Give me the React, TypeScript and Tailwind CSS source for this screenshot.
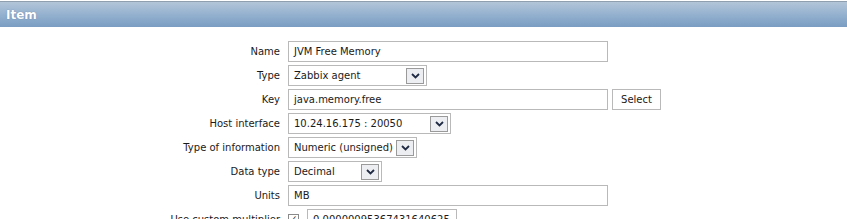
import React from "react";

type Row = {
  label: string;
  kind: "text" | "select" | "key" | "multiplier";
  value: string;
  width: number;
};

const rows: Row[] = [
  { label: "Name", kind: "text", value: "JVM Free Memory", width: 320 },
  { label: "Type", kind: "select", value: "Zabbix agent", width: 139 },
  { label: "Key", kind: "key", value: "java.memory.free", width: 320 },
  { label: "Host interface", kind: "select", value: "10.24.16.175 : 20050", width: 163 },
  { label: "Type of information", kind: "select", value: "Numeric (unsigned)", width: 129 },
  { label: "Data type", kind: "select", value: "Decimal", width: 94 },
  { label: "Units", kind: "text", value: "MB", width: 320 },
  { label: "Use custom multiplier", kind: "multiplier", value: "0.00000095367431640625", width: 150 },
];

function Arrow() {
  return (
    <span className="flex h-[16px] w-[18px] shrink-0 items-center justify-center border border-[#9a9a9a] bg-[#eceef1]">
      <svg width="9" height="6" viewBox="0 0 9 6">
        <path d="M1 1 L4.5 4.5 L8 1" fill="none" stroke="#1f2a44" strokeWidth="1.8" />
      </svg>
    </span>
  );
}

function Field({ row }: { row: Row }) {
  if (row.kind === "select") {
    return (
      <div
        className="flex h-[21px] items-center justify-between whitespace-nowrap border border-[#b9b9b9] bg-white pl-[5px] pr-[2px]"
        style={{ width: row.width }}
      >
        <span>{row.value}</span>
        <Arrow />
      </div>
    );
  }
  if (row.kind === "multiplier") {
    return (
      <div className="flex items-center gap-[8px]">
        <span className="flex h-[11px] w-[11px] items-center justify-center border border-[#8a8a8a] bg-white text-[9px] leading-none">
          ✓
        </span>
        <div
          className="flex h-[21px] items-center overflow-hidden whitespace-nowrap border border-[#b9b9b9] bg-white pl-[5px]"
          style={{ width: row.width }}
        >
          {row.value}
        </div>
      </div>
    );
  }
  return (
    <div className="flex items-center gap-[4px]">
      <div
        className="flex h-[21px] items-center border border-[#b9b9b9] bg-white pl-[5px]"
        style={{ width: row.width }}
      >
        {row.value}
      </div>
      {row.kind === "key" && (
        <button className="h-[21px] w-[49px] border border-[#b9b9b9] bg-white text-center">
          Select
        </button>
      )}
    </div>
  );
}

export default function App() {
  return (
    <div
      className="h-[219px] w-[847px] overflow-hidden bg-white text-[10px] text-[#1a1a1a]"
      style={{ fontFamily: "'DejaVu Sans', Verdana, sans-serif" }}
    >
      <div className="mt-[1px] flex h-[26px] items-center border-t border-[#8f9fb0] bg-gradient-to-b from-[#b3c5d8] via-[#94b1cf] to-[#7a9dc2] pl-[6px]">
        <span className="text-[12px] font-bold text-white [text-shadow:0_0_1px_#5a7090]">Item</span>
      </div>
      <div className="flex flex-col gap-[3px] pt-[14px]">
        {rows.map((row) => (
          <div key={row.label} className="flex items-center">
            <div className="w-[280px] whitespace-nowrap text-right">{row.label}</div>
            <div className="pl-[8px]">
              <Field row={row} />
            </div>
          </div>
        ))}
      </div>
    </div>
  );
}
